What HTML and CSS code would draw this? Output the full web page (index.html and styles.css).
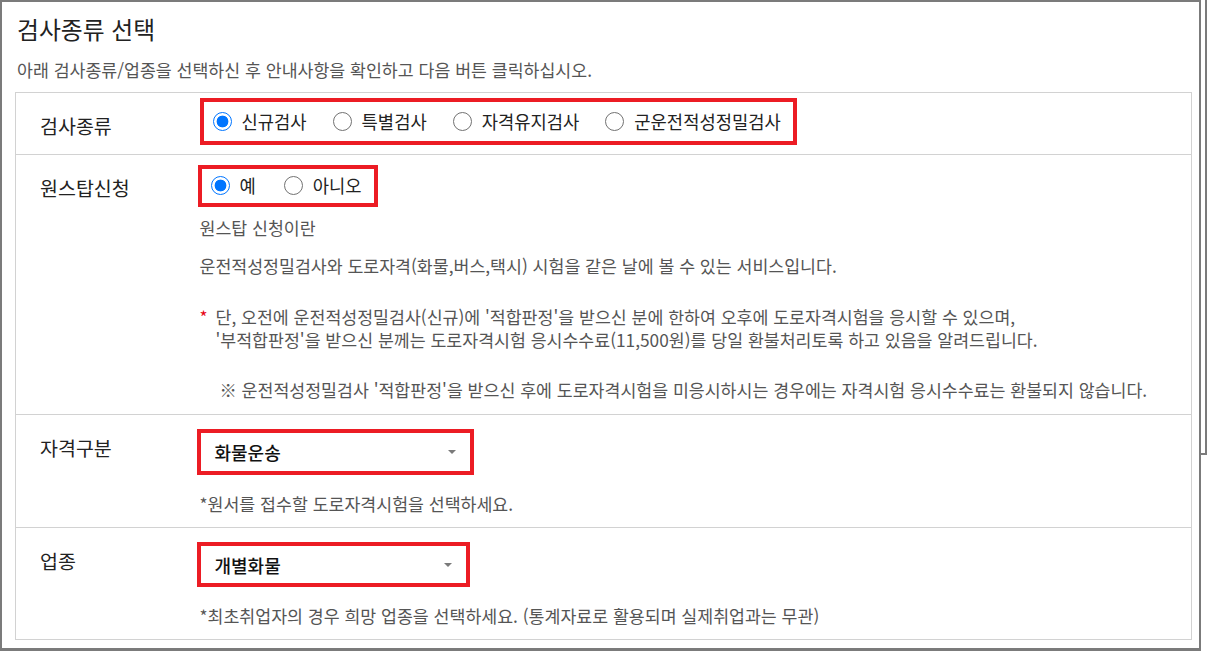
FILE: index.html
```html
<!DOCTYPE html>
<html lang="ko">
<head>
    <meta charset="UTF-8">
    <meta name="viewport" content="width=device-width, initial-scale=1.0">
    <title>검사종류 선택</title>
    <link rel="stylesheet" href="styles.css">
</head>
<body>
    <div class="frame">
        <h2 class="page-title">검사종류 선택</h2>
        <p class="page-desc">아래 검사종류/업종을 선택하신 후 안내사항을 확인하고 다음 버튼 클릭하십시오.</p>

        <table class="form-table">
            <tr class="row-type">
                <th>검사종류</th>
                <td>
                    <div class="mark radio-group">
                        <label class="radio"><input type="radio" name="examType" value="new" checked> 신규검사</label>
                        <label class="radio"><input type="radio" name="examType" value="special"> 특별검사</label>
                        <label class="radio"><input type="radio" name="examType" value="keep"> 자격유지검사</label>
                        <label class="radio"><input type="radio" name="examType" value="army"> 군운전적성정밀검사</label>
                    </div>
                </td>
            </tr>
            <tr class="row-onestop">
                <th>원스탑신청</th>
                <td>
                    <div class="mark radio-group small">
                        <label class="radio"><input type="radio" name="oneStop" value="Y" checked> 예</label>
                        <label class="radio"><input type="radio" name="oneStop" value="N"> 아니오</label>
                    </div>
                    <p class="info-title">원스탑 신청이란</p>
                    <p class="info-text">운전적성정밀검사와 도로자격(화물,버스,택시) 시험을 같은 날에 볼 수 있는 서비스입니다.</p>
                    <p class="info-note"><span class="star">*</span>단, 오전에 운전적성정밀검사(신규)에 '적합판정'을 받으신 분에 한하여 오후에 도로자격시험을 응시할 수 있으며,<br>'부적합판정'을 받으신 분께는 도로자격시험 응시수수료(11,500원)를 당일 환불처리토록 하고 있음을 알려드립니다.</p>
                    <p class="info-ref">※ 운전적성정밀검사 '적합판정'을 받으신 후에 도로자격시험을 미응시하시는 경우에는 자격시험 응시수수료는 환불되지 않습니다.</p>
                </td>
            </tr>
            <tr>
                <th>자격구분</th>
                <td>
                    <div class="mark select-box">
                        <span class="select-value">화물운송</span>
                        <span class="select-arrow"></span>
                    </div>
                    <p class="help">*원서를 접수할 도로자격시험을 선택하세요.</p>
                </td>
            </tr>
            <tr>
                <th>업종</th>
                <td>
                    <div class="mark select-box narrow">
                        <span class="select-value">개별화물</span>
                        <span class="select-arrow"></span>
                    </div>
                    <p class="help">*최초취업자의 경우 희망 업종을 선택하세요. (통계자료로 활용되며 실제취업과는 무관)</p>
                </td>
            </tr>
        </table>
    </div>
    <div class="behind"></div>
</body>
</html>
```

FILE: styles.css
```css
* {
    box-sizing: border-box;
}

body {
    margin: 0;
    display: flex;
    align-items: flex-start;
    font-family: "Noto Sans CJK KR", "Noto Sans", sans-serif;
    color: #555;
    background: #fff;
}

.frame {
    width: 1201px;
    height: 651px;
    border: 2px solid #7b7b7b;
    border-bottom-width: 3px;
    padding: 0 13px;
    overflow: hidden;
}

.behind {
    width: 6px;
    height: 455px;
    border-right: 2px solid #7b7b7b;
    border-bottom: 2px solid #7b7b7b;
}

.page-title {
    margin: 10px 0 0;
    padding-left: 2px;
    font-size: 23.8px;
    line-height: 33px;
    font-weight: 400;
    color: #222;
}

.page-desc {
    margin: 13px 0 0;
    padding-left: 2px;
    font-size: 17.3px;
    line-height: 24px;
    color: #555;
}

.form-table {
    width: 1177px;
    margin-top: 10px;
    border-collapse: collapse;
    border: 1px solid #d2d2d2;
}

.form-table tr {
    border-top: 1px solid #d2d2d2;
}

.form-table th {
    width: 184px;
    padding: 19px 0 0 24px;
    vertical-align: top;
    text-align: left;
    font-size: 19.5px;
    line-height: 27px;
    font-weight: 400;
    color: #222;
}

.form-table td {
    padding: 14px 0 11px;
    vertical-align: top;
    font-size: 17.3px;
    line-height: 24px;
}

.form-table p {
    margin: 0;
}

.row-type td {
    padding: 5px 0 9px;
}

.row-onestop td {
    padding: 10px 0 13px;
}

.mark {
    border: 4px solid #ec1c24;
}

.radio-group {
    display: inline-flex;
    align-items: center;
    gap: 26px;
    padding: 7px 12px 8px 9px;
}

.radio-group.small {
    margin-left: -2px;
    padding: 4px 12px 6px 9px;
    gap: 28px;
}

.radio {
    display: inline-flex;
    align-items: center;
    gap: 10px;
    font-size: 17.7px;
    color: #222;
    cursor: pointer;
}

.radio input {
    appearance: none;
    flex: none;
    width: 19px;
    height: 19px;
    margin: 0;
    border: 1px solid #727272;
    border-radius: 50%;
    background: #fff;
}

.radio input:checked {
    border: 1.5px solid #0075ff;
    background: radial-gradient(circle, #0075ff 0 5.6px, #fff 6.2px);
}

.info-title {
    margin-top: 9px !important;
}

.info-text {
    margin-top: 14px !important;
}

.info-note {
    position: relative;
    margin-top: 27px !important;
    padding-left: 16px;
    line-height: 23px;
}

.star {
    position: absolute;
    left: 0;
    top: 0;
    color: #e60012;
}

.info-ref {
    margin-top: 27px !important;
    padding-left: 20px;
    line-height: 23px;
}

.select-box {
    display: flex;
    align-items: center;
    justify-content: space-between;
    width: 277px;
    height: 46px;
    margin-left: -3px;
    padding: 0 14px;
    background: #fff;
}

.select-box.narrow {
    width: 273px;
    height: 45px;
}

.select-value {
    font-size: 18px;
    font-weight: 500;
    color: #111;
}

.select-arrow {
    width: 0;
    height: 0;
    border-left: 4px solid transparent;
    border-right: 4px solid transparent;
    border-top: 4px solid #7a7a7a;
}

.help {
    margin-top: 17px !important;
    color: #555;
}
```
